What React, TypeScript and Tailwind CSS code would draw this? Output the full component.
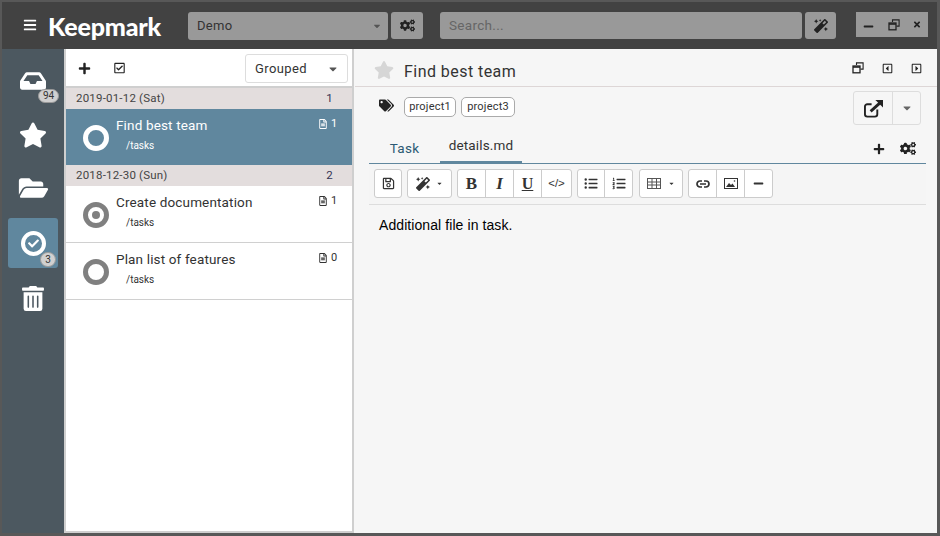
import {
  FaBars, FaCheck, FaCogs, FaFolderOpen, FaInbox, FaListOl, FaListUl, FaMagic,
  FaMinus, FaPlus, FaRegCaretSquareLeft, FaRegCaretSquareRight, FaRegCheckSquare, FaRegFileAlt,
  FaRegSave, FaStar, FaTags, FaTimes, FaTrashAlt, FaCaretDown,
} from 'react-icons/fa';
import type { ReactNode } from 'react';

function Badge({ n, className }: { n: string; className: string }) {
  return (
    <span className={`absolute rounded-full bg-[#d0d0d0] border border-[#999] text-[#333] text-[10px] text-center ${className}`}>
      {n}
    </span>
  );
}

function RestoreIcon({ className }: { className: string }) {
  return (
    <svg viewBox="0 0 12 12" className={className} fill="none" stroke="currentColor">
      <path d="M4.5 3V.9h6.6v6.2H8.5" strokeWidth="1.1" />
      <rect x="1" y="4" width="7" height="6.8" strokeWidth="1.3" />
      <path d="M1 5h7" strokeWidth="1.6" />
    </svg>
  );
}

function GroupRow({ date, count }: { date: string; count: string }) {
  return (
    <div className="h-[21px] bg-[#e3dddd] flex items-center justify-between pl-[10px] pr-[19px] text-[11.5px] text-[#444] tracking-[0.2px]">
      <span>{date}</span>
      <span className="text-[#335]">{count}</span>
    </div>
  );
}

function TaskRow({ title, files, ring, selected, dot }: { title: string; files: string; ring: string; selected?: boolean; dot?: boolean }) {
  return (
    <div className={`flex ${selected ? 'h-[56px] bg-[#60879e] text-white' : 'h-[57px] bg-white text-[#333] border-b border-[#d0d0d0]'}`}>
      <div className="w-[50px] pl-[17px] pt-[16px] shrink-0">
        <div className={`w-[26px] h-[26px] rounded-full border-[5px] flex items-center justify-center ${ring}`}>
          {dot && <div className="w-[8px] h-[8px] rounded-full bg-[#808080]" />}
        </div>
      </div>
      <div className="flex-1 pt-[8px]">
        <div className="text-[13.5px] leading-[16px] tracking-[0.15px]">{title}</div>
        <div className="text-[10px] leading-[12px] mt-[7px] ml-[10px]">/tasks</div>
      </div>
      <div className="w-[33px] pt-[8px] flex items-start gap-[4px] text-[11px] leading-[13px] shrink-0">
        <FaRegFileAlt className="w-[8px] h-[10px] mt-[2px]" />
        <span>{files}</span>
      </div>
    </div>
  );
}

function ToolGroup({ children }: { children: ReactNode }) {
  return <div className="flex h-[29px] bg-white border border-[#ccc] rounded-[3px] divide-x divide-[#ccc] text-[#333]">{children}</div>;
}

function ToolBtn({ children, w = 'w-[27px]' }: { children: ReactNode; w?: string }) {
  return <div className={`h-full flex items-center justify-center ${w}`}>{children}</div>;
}

export default function App() {
  return (
    <div className="w-[940px] h-[536px] bg-[#585858] pl-[2px] pr-[3px] pb-[3px] pt-[2px] flex flex-col overflow-hidden font-['Roboto',sans-serif]">
      {/* title bar */}
      <div className="h-[47px] shrink-0 bg-[#424242] flex items-start">
        <FaBars className="text-white w-[14px] h-[14px] ml-[21px] mt-[16px]" />
        <div className="text-white font-['Lato',sans-serif] font-black text-[25px] leading-[30px] ml-[11px] mt-[9px] w-[126px] tracking-[-0.2px]">Keepmark</div>
        <div className="mt-[10px] ml-[14px] w-[200px] h-[28px] bg-[#999] rounded-[3px] flex items-center justify-between pl-[9px] pr-[6px] text-[13px] text-[#333]">
          <span className="tracking-[0.3px]">Demo</span>
          <FaCaretDown className="w-[10px] h-[10px] text-[#555]" />
        </div>
        <div className="mt-[10px] ml-[3px] w-[32px] h-[27px] bg-[#999] rounded-[3px] flex items-center justify-center">
          <FaCogs className="w-[15px] h-[13px] text-[#222]" />
        </div>
        <div className="mt-[10px] ml-[17px] w-[362px] h-[27px] bg-[#999] rounded-[3px] flex items-center pl-[9px] text-[13.5px] text-[#666] tracking-[0.3px]">Search...</div>
        <div className="mt-[10px] ml-[3px] w-[31px] h-[27px] bg-[#999] rounded-[3px] flex items-center justify-center">
          <FaMagic className="w-[14px] h-[14px] text-[#222]" />
        </div>
        <div className="mt-[10px] ml-[20px] w-[72px] h-[25px] bg-[#999] flex items-center justify-between pl-[7px] pr-[7px] text-[#222]">
          <FaMinus className="w-[11px] h-[11px] mt-[4px]" />
          <RestoreIcon className="w-[12px] h-[12px]" />
          <FaTimes className="w-[8px] h-[9px]" />
        </div>
      </div>

      <div className="flex-1 flex min-h-0">
        {/* sidebar */}
        <div className="w-[62px] shrink-0 bg-[#4c5860] flex flex-col items-center text-white pt-[7px]">
          <div className="relative w-[50px] h-[50px] flex items-center justify-center">
            <FaInbox className="w-[26px] h-[24px]" />
            <Badge n="94" className="w-[21px] h-[14px] leading-[12px] left-[30px] top-[33px]" />
          </div>
          <div className="h-[50px] w-[50px] flex items-center justify-center mt-[4px]">
            <FaStar className="w-[28px] h-[26px]" />
          </div>
          <div className="h-[50px] w-[50px] flex items-center justify-center mt-[3px]">
            <FaFolderOpen className="w-[31px] h-[26px]" />
          </div>
          <div className="relative w-[50px] h-[50px] bg-[#60879e] rounded-[3px] flex items-center justify-center mt-[5px]">
            <div className="w-[25px] h-[25px] rounded-full border-[4px] border-white flex items-center justify-center">
              <FaCheck className="w-[11px] h-[11px]" />
            </div>
            <Badge n="3" className="w-[16px] h-[15px] leading-[13px] left-[32px] top-[34px]" />
          </div>
          <div className="h-[50px] w-[50px] flex items-center justify-center mt-[5px]">
            <FaTrashAlt className="w-[22px] h-[25px]" />
          </div>
        </div>

        {/* task list */}
        <div className="w-[290px] shrink-0 bg-white border-x-2 border-b-2 border-[#cfcfcf] flex flex-col">
          <div className="h-[37px] shrink-0 bg-white flex items-start">
            <FaPlus className="w-[13px] h-[13px] text-[#222] ml-[12px] mt-[13px]" />
            <FaRegCheckSquare className="w-[13px] h-[12px] text-[#222] ml-[22px] mt-[13px]" />
            <div className="ml-auto mr-[4px] mt-[5px] w-[103px] h-[29px] border border-[#ddd] rounded-[3px] flex items-center justify-between pl-[9px] pr-[8px] text-[13px] text-[#333] tracking-[0.4px]">
              <span>Grouped</span>
              <FaCaretDown className="w-[12px] h-[12px] text-[#555]" />
            </div>
          </div>
          <div className="border-t-2 border-[#cfcfcf]">
            <GroupRow date="2019-01-12 (Sat)" count="1" />
            <TaskRow title="Find best team" files="1" ring="border-white" selected />
            <GroupRow date="2018-12-30 (Sun)" count="2" />
            <TaskRow title="Create documentation" files="1" ring="border-[#808080]" dot />
            <TaskRow title="Plan list of features" files="0" ring="border-[#808080]" />
          </div>
        </div>

        {/* detail */}
        <div className="flex-1 bg-[#f6f6f6] pl-[1px] min-w-0">
          <div className="h-[38px] flex items-start border-b border-[#ddd6d6] pl-[19px] pr-[15px]">
            <FaStar className="w-[20px] h-[18px] text-[#d6d6d6] mt-[12px]" />
            <div className="ml-[10px] text-[16px] leading-[20px] text-[#333] tracking-[0.45px] flex-1 mt-[13px]">Find best team</div>
            <div className="flex items-center gap-[18px] text-[#222] mt-[13px]">
              <RestoreIcon className="w-[12px] h-[12px]" />
              <FaRegCaretSquareLeft className="w-[11px] h-[11px]" />
              <FaRegCaretSquareRight className="w-[11px] h-[11px]" />
            </div>
          </div>
          <div className="flex items-start pl-[24px] pr-[16px] h-[46px]">
            <FaTags className="w-[15px] h-[13px] text-[#222] mt-[12px]" />
            <div className="flex gap-[5px] ml-[10px] mt-[10px]">
              <span className="h-[20px] w-[52px] text-center bg-white border border-[#aaa] rounded-[5px] text-[11px] leading-[18px] text-[#333] tracking-[0.2px]">project1</span>
              <span className="h-[20px] w-[54px] text-center bg-white border border-[#aaa] rounded-[5px] text-[11px] leading-[18px] text-[#333] tracking-[0.2px]">project3</span>
            </div>
            <div className="ml-auto mt-[4px] h-[34px] w-[68px] border border-[#ddd] rounded-[3px] flex divide-x divide-[#ddd]">
              <div className="w-[39px] flex items-center justify-center">
                <svg viewBox="0 0 22 20" className="w-[21px] h-[19px]" fill="none" stroke="#222" strokeWidth="2">
                  <path d="M15 11v5a2.5 2.5 0 0 1-2.5 2.5h-8A2.5 2.5 0 0 1 2 16V8a2.5 2.5 0 0 1 2.5-2.5H9" />
                  <path d="M8 13 19 3" strokeWidth="3" />
                  <path d="M13 1h8v8z" fill="#222" stroke="none" />
                </svg>
              </div>
              <div className="flex-1 flex items-center justify-center">
                <FaCaretDown className="w-[12px] h-[12px] text-[#666]" />
              </div>
            </div>
          </div>
          <div className="flex items-end h-[31px] ml-[14px] mr-[11px] border-b border-[#60879e]">
            <div className="w-[71px] text-center text-[13.5px] text-[#2c5a74] tracking-[0.3px] pb-[5px]">Task</div>
            <div className="w-[82px] text-center text-[13.5px] text-[#333] tracking-[0.15px] pb-[6px] border-b-[3px] border-[#60879e] -mb-[1px]">details.md</div>
            <div className="ml-auto flex items-center gap-[15px] pb-[8px] pr-[10px] text-[#222]">
              <FaPlus className="w-[12px] h-[12px]" />
              <FaCogs className="w-[16px] h-[13px]" />
            </div>
          </div>
          <div className="h-[41px] ml-[14px] mr-[11px] bg-[#f5f5f5] border-b border-[#ddd] flex items-start gap-[5px] pl-[5px] pt-[5px]">
            <ToolGroup><ToolBtn w="w-[26px]"><FaRegSave className="w-[13px] h-[13px]" /></ToolBtn></ToolGroup>
            <ToolGroup>
              <ToolBtn w="w-[43px]">
                <FaMagic className="w-[14px] h-[14px] mr-[6px]" />
                <FaCaretDown className="w-[7px] h-[7px]" />
              </ToolBtn>
            </ToolGroup>
            <ToolGroup>
              <ToolBtn w="w-[28px]"><span className="font-['Liberation_Serif',serif] font-bold text-[17px]">B</span></ToolBtn>
              <ToolBtn w="w-[28px]"><span className="font-['Liberation_Serif',serif] font-bold italic text-[17px]">I</span></ToolBtn>
              <ToolBtn w="w-[28px]"><span className="font-['Liberation_Serif',serif] font-bold underline text-[16px]">U</span></ToolBtn>
              <ToolBtn w="w-[29px]"><span className="text-[11.5px] font-['Liberation_Sans',sans-serif]">&lt;/&gt;</span></ToolBtn>
            </ToolGroup>
            <ToolGroup>
              <ToolBtn><FaListUl className="w-[14px] h-[13px]" /></ToolBtn>
              <ToolBtn><FaListOl className="w-[14px] h-[13px]" /></ToolBtn>
            </ToolGroup>
            <div className="ml-[1px]">
              <ToolGroup>
                <ToolBtn w="w-[42px]">
                  <svg viewBox="0 0 14 11" className="w-[14px] h-[11px] mr-[7px] text-[#555]" fill="none" stroke="currentColor" strokeWidth="1">
                    <rect x=".5" y=".5" width="13" height="10" />
                    <path d="M.5 4h13M.5 7h13M5 .5v10M9.500 .5v10" />
                  </svg>
                  <FaCaretDown className="w-[7px] h-[7px]" />
                </ToolBtn>
              </ToolGroup>
            </div>
            <ToolGroup>
              <ToolBtn w="w-[28px]">
                <svg viewBox="0 0 14 8" className="w-[14px] h-[8px]" fill="none" stroke="currentColor" strokeWidth="1.700">
                  <path d="M6 1H4a3 3 0 0 0 0 6h2M8 1h2a3 3 0 0 1 0 6H8M4 4h6" />
                </svg>
              </ToolBtn>
              <ToolBtn w="w-[28px]">
                <svg viewBox="0 0 14 11" className="w-[14px] h-[11px]" fill="none" stroke="currentColor">
                  <rect x=".5" y=".5" width="13" height="10" />
                  <path d="M2 9l3-4 2 2 1.500-1.500L11 9z" fill="currentColor" stroke="none" />
                  <circle cx="10.500" cy="3" r=".8" fill="currentColor" stroke="none" />
                </svg>
              </ToolBtn>
              <ToolBtn w="w-[27px]"><FaMinus className="w-[11px] h-[11px]" /></ToolBtn>
            </ToolGroup>
          </div>
          <div className="ml-[24px] mt-[12px] text-[14px] leading-[16px] text-black tracking-[0.08px] font-['Liberation_Sans',sans-serif]">Additional file in task.</div>
        </div>
      </div>
    </div>
  );
}
